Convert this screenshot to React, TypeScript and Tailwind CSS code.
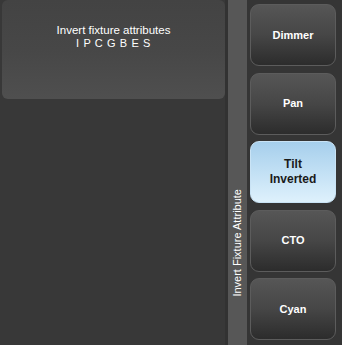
import React from "react";

const font = { fontFamily: '"Liberation Sans", Arial, sans-serif' };

function Btn({ label, active }: { label: React.ReactNode; active?: boolean }) {
  return (
    <div
      className={
        active
          ? "h-[62px] rounded-[9px] border border-[#c9e3f5] bg-gradient-to-b from-[#a6cfec] to-[#def1fc] flex items-center justify-center text-center text-[12px] font-bold leading-[15px] text-[#1a1a1a]"
          : "h-[62px] rounded-[9px] border border-[#5c5c5c] bg-gradient-to-b from-[#565656] via-[#464646] to-[#2c2c2c] flex items-center justify-center text-center text-[11px] font-bold text-white"
      }
    >
      {label}
    </div>
  );
}

export default function App() {
  return (
    <div className="w-[342px] h-[345px] bg-[#353535] flex overflow-hidden" style={font}>
      <div className="w-[225px] pl-[2px] bg-[#383838]">
        <div className="h-[99px] rounded-md bg-gradient-to-b from-[#434343] via-[#474747] to-[#4f4f4f] flex flex-col items-center pt-[24px] text-white text-[11.5px] leading-[13px]">
          <div>Invert fixture attributes</div>
          <div className="tracking-[0.6px] text-[11px]">I P C G B E S</div>
        </div>
      </div>
      <div className="w-[3px] bg-[#323232]" />
      <div className="w-[19px] bg-[#575757] flex flex-col justify-end items-center pb-[48px]">
        <div
          className="text-white text-[11px] whitespace-nowrap leading-[19px]"
          style={{ writingMode: "vertical-rl", transform: "rotate(180deg)" }}
        >
          Invert Fixture Attribute
        </div>
      </div>
      <div className="w-[95px] bg-[#353535] pl-[3px] pr-[6px] pt-[4px] flex flex-col gap-[6.5px]">
        <Btn label="Dimmer" />
        <Btn label="Pan" />
        <Btn active label={<span>Tilt<br />Inverted</span>} />
        <Btn label="CTO" />
        <Btn label="Cyan" />
      </div>
    </div>
  );
}
